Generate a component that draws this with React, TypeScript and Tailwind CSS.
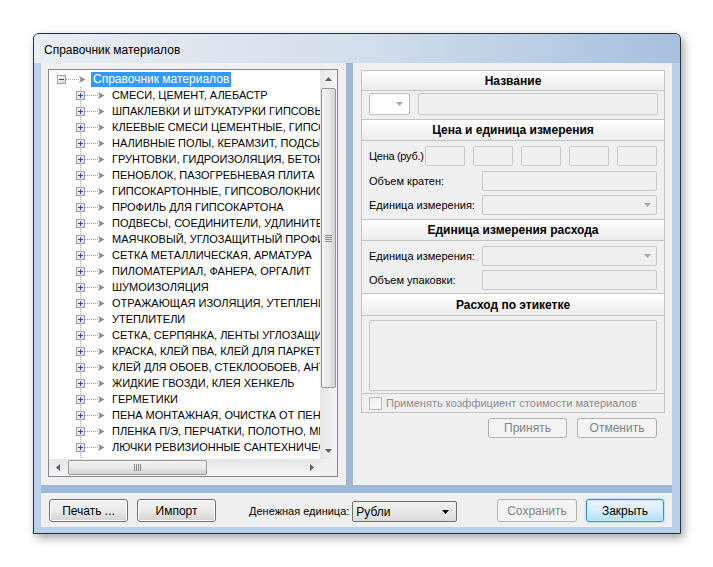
import clsx from "clsx";

const ITEMS = [
  "СМЕСИ, ЦЕМЕНТ, АЛЕБАСТР",
  "ШПАКЛЕВКИ И ШТУКАТУРКИ ГИПСОВЫЕ",
  "КЛЕЕВЫЕ СМЕСИ ЦЕМЕНТНЫЕ, ГИПСОВЫЕ",
  "НАЛИВНЫЕ ПОЛЫ, КЕРАМЗИТ, ПОДСЫПКА",
  "ГРУНТОВКИ, ГИДРОИЗОЛЯЦИЯ, БЕТОНОКОНТАКТ",
  "ПЕНОБЛОК, ПАЗОГРЕБНЕВАЯ ПЛИТА",
  "ГИПСОКАРТОННЫЕ, ГИПСОВОЛОКНИСТЫЕ ЛИСТЫ",
  "ПРОФИЛЬ ДЛЯ ГИПСОКАРТОНА",
  "ПОДВЕСЫ, СОЕДИНИТЕЛИ, УДЛИНИТЕЛИ",
  "МАЯЧКОВЫЙ, УГЛОЗАЩИТНЫЙ ПРОФИЛЬ",
  "СЕТКА МЕТАЛЛИЧЕСКАЯ, АРМАТУРА",
  "ПИЛОМАТЕРИАЛ, ФАНЕРА, ОРГАЛИТ",
  "ШУМОИЗОЛЯЦИЯ",
  "ОТРАЖАЮЩАЯ ИЗОЛЯЦИЯ, УТЕПЛЕНИЕ",
  "УТЕПЛИТЕЛИ",
  "СЕТКА, СЕРПЯНКА, ЛЕНТЫ УГЛОЗАЩИТНЫЕ",
  "КРАСКА, КЛЕЙ ПВА, КЛЕЙ ДЛЯ ПАРКЕТА",
  "КЛЕЙ ДЛЯ ОБОЕВ, СТЕКЛООБОЕВ, АНТИСЕПТИК",
  "ЖИДКИЕ ГВОЗДИ, КЛЕЯ ХЕНКЕЛЬ",
  "ГЕРМЕТИКИ",
  "ПЕНА МОНТАЖНАЯ, ОЧИСТКА ОТ ПЕНЫ",
  "ПЛЕНКА П/Э, ПЕРЧАТКИ, ПОЛОТНО, МЕШКИ",
  "ЛЮЧКИ РЕВИЗИОННЫЕ САНТЕХНИЧЕСКИЕ",
  "ИНСТРУМЕНТ",
];

/* узел дерева: квадратик +/-, пунктир и стрелка */
function NodeGlyph({ root }: { root?: boolean }) {
  return (
    <svg width="29" height="16" viewBox="0 0 29 16" className="shrink-0">
      <defs>
        <linearGradient id="boxg" x1="0" y1="0" x2="1" y2="1">
          <stop offset="0" stopColor="#ffffff" />
          <stop offset="1" stopColor="#d6d6d6" />
        </linearGradient>
      </defs>
      {!root && (
        <line x1="4.5" y1="0" x2="4.5" y2="16" stroke="#a0a0a0" strokeDasharray="1 1" />
      )}
      <line x1="9" y1="8.5" x2="22" y2="8.5" stroke="#a0a0a0" strokeDasharray="1 1" />
      <rect x="0.5" y="4.5" width="8" height="8" fill="url(#boxg)" stroke="#97a0ab" />
      <line x1="2" y1="8.5" x2="7" y2="8.5" stroke="#2d4d87" />
      {!root && <line x1="4.5" y1="6" x2="4.5" y2="11" stroke="#2d4d87" />}
      <path d="M22 5 L28.5 8.5 L22 12 L23.6 8.5 Z" fill="#8c8c8c" />
    </svg>
  );
}

function Tri({ dir, color = "#606060" }: { dir: "up" | "down" | "left" | "right"; color?: string }) {
  const pts = {
    up: "0,4 3.5,0 7,4",
    down: "0,0 3.5,4 7,0",
    left: "4,0 0,3.5 4,7",
    right: "0,0 4,3.5 0,7",
  }[dir];
  const vertical = dir === "up" || dir === "down";
  return (
    <svg width={vertical ? 7 : 4} height={vertical ? 4 : 7} viewBox={vertical ? "0 0 7 4" : "0 0 4 7"}>
      <polygon points={pts} fill={color} />
    </svg>
  );
}

function WinButton({
  children,
  className,
  disabled,
  focused,
}: {
  children: React.ReactNode;
  className?: string;
  disabled?: boolean;
  focused?: boolean;
}) {
  return (
    <div
      className={clsx(
        "flex items-center justify-center rounded-[3px] border text-[12px]",
        disabled && "border-[#adb2b5] bg-[#f4f4f4] text-[#838383]",
        focused &&
          "border-[#3d8ed0] bg-linear-to-b from-[#eaf6fd] via-[#d6effc] to-[#b4def5] shadow-[inset_0_0_0_1px_#c4ebfb,0_0_2px_#5ab8ee]",
        !disabled &&
          !focused &&
          "border-[#707070] bg-linear-to-b from-[#f3f3f3] via-[#ebebeb] to-[#d3d3d3] shadow-[inset_0_0_0_1px_#fbfbfb]",
        className
      )}
    >
      {children}
    </div>
  );
}

function Field({ w, h = "h-[20px]", select }: { w: string; h?: string; select?: boolean }) {
  return (
    <div
      className={clsx(
        "flex items-center justify-end rounded-[2px] border border-[#c8c8c8] bg-[#f0f0f0] pr-[5px]",
        w,
        h
      )}
    >
      {select && <Tri dir="down" color="#a8a8a8" />}
    </div>
  );
}

function Header({ title, h }: { title: string; h: string }) {
  return (
    <div
      className={clsx(
        "flex items-center justify-center border-b border-[#c4c4c4] bg-linear-to-b from-[#ffffff] to-[#ececec] text-[12px] font-bold",
        h
      )}
    >
      {title}
    </div>
  );
}

export default function App() {
  return (
    <div className="h-[567px] w-[713px] overflow-hidden bg-white font-['Liberation_Sans',Arial,sans-serif] text-black">
      {/* окно */}
      <div className="ml-[33px] mt-[33px] flex h-[501px] w-[648px] flex-col overflow-hidden rounded-t-[6px] border border-[#27313d] bg-[#b9d1ea] shadow-[3px_4px_10px_rgba(0,0,0,0.35)]">
        <div className="flex h-[29px] shrink-0 items-center bg-linear-to-r from-[#e9eef4] via-[#d3dfec] to-[#a6c0df] pl-[10px] pt-[3px] text-[12px]">
          Справочник материалов
        </div>

        <div className="flex flex-1 pb-[6px] pl-[7px] pr-[8px]">
          <div className="flex h-[464px] w-[631px] flex-col bg-[#9eb8d7]">
            <div className="flex h-[422px] gap-[7px]">
              {/* левая панель – дерево */}
              <div className="w-[305px] bg-[#f0f0f0] pl-[7px] pt-[6px]">
                <div className="flex h-[408px] w-[290px] flex-col border border-[#828790] bg-white">
                  <div className="flex h-[389px]">
                    <div className="w-[271px] overflow-hidden pt-[1px] whitespace-nowrap">
                      <div className="flex h-[16px] items-center">
                        <div className="w-[8px] shrink-0" />
                        <NodeGlyph root />
                        <span className="ml-[5px] h-[15px] bg-[#3399ff] px-[2px] text-[12px] leading-[15px] text-white">
                          Справочник материалов
                        </span>
                      </div>
                      {ITEMS.map((label) => (
                        <div key={label} className="flex h-[16px] items-center">
                          <div className="w-[27px] shrink-0" />
                          <NodeGlyph />
                          <span className="ml-[5px] px-[2px] text-[11px] leading-[16px]">{label}</span>
                        </div>
                      ))}
                    </div>
                    {/* вертикальная прокрутка */}
                    <div className="flex w-[17px] flex-col bg-linear-to-r from-[#e6e6e6] to-[#f5f5f5]">
                      <div className="flex h-[17px] items-center justify-center">
                        <Tri dir="up" />
                      </div>
                      <div className="mx-[1px] mt-[1px] flex h-[300px] items-center justify-center rounded-[2px] border border-[#979797] bg-linear-to-r from-[#f4f4f4] via-[#e8e8e8] to-[#d4d4d4]">
                        <div className="flex flex-col gap-[1px]">
                          <div className="h-[1px] w-[7px] bg-[#8a8a8a]" />
                          <div className="h-[1px] w-[7px] bg-[#8a8a8a]" />
                          <div className="h-[1px] w-[7px] bg-[#8a8a8a]" />
                          <div className="h-[1px] w-[7px] bg-[#8a8a8a]" />
                        </div>
                      </div>
                      <div className="mt-auto flex h-[17px] items-center justify-center">
                        <Tri dir="down" />
                      </div>
                    </div>
                  </div>
                  {/* горизонтальная прокрутка */}
                  <div className="flex h-[17px]">
                    <div className="flex w-[271px] items-center bg-linear-to-b from-[#e6e6e6] to-[#f5f5f5]">
                      <div className="flex w-[17px] justify-center">
                        <Tri dir="left" />
                      </div>
                      <div className="ml-[2px] flex h-[15px] w-[139px] items-center justify-center gap-[1px] rounded-[2px] border border-[#979797] bg-linear-to-b from-[#f4f4f4] via-[#e8e8e8] to-[#d4d4d4]">
                        <div className="h-[7px] w-[1px] bg-[#8a8a8a]" />
                        <div className="h-[7px] w-[1px] bg-[#8a8a8a]" />
                        <div className="h-[7px] w-[1px] bg-[#8a8a8a]" />
                        <div className="h-[7px] w-[1px] bg-[#8a8a8a]" />
                      </div>
                      <div className="ml-auto flex w-[17px] justify-center">
                        <Tri dir="right" />
                      </div>
                    </div>
                    <div className="w-[17px] bg-[#f0f0f0]" />
                  </div>
                </div>
              </div>

              {/* правая панель – свойства */}
              <div className="w-[319px] whitespace-nowrap bg-[#f0f0f0] pl-[8px] pt-[7px] text-[11px]">
                <div className="w-[304px] border border-[#c4c4c4]">
                  <Header title="Название" h="h-[20px]" />
                  <div className="flex h-[29px] gap-[8px] border-b border-[#c4c4c4] pl-[7px] pt-[2px]">
                    <div className="flex h-[22px] w-[41px] items-center justify-end rounded-[2px] border border-[#bdbdbd] bg-white pr-[6px]">
                      <Tri dir="down" color="#a8a8a8" />
                    </div>
                    <Field w="w-[240px]" h="h-[22px]" />
                  </div>

                  <Header title="Цена и единица измерения" h="h-[21px]" />
                  <div className="flex h-[79px] flex-col border-b border-[#c4c4c4] pl-[7px] pt-[5px]">
                    <div className="flex h-[20px] items-center">
                      <div className="w-[56px] tracking-[-0.3px]">Цена (руб.)</div>
                      <div className="flex gap-[8px]">
                        <Field w="w-[40px]" />
                        <Field w="w-[40px]" />
                        <Field w="w-[40px]" />
                        <Field w="w-[40px]" />
                        <Field w="w-[40px]" />
                      </div>
                    </div>
                    <div className="mt-[5px] flex h-[20px] items-center">
                      <div className="w-[113px]">Объем кратен:</div>
                      <Field w="w-[175px]" />
                    </div>
                    <div className="mt-[4px] flex h-[20px] items-center">
                      <div className="w-[113px]">Единица измерения:</div>
                      <Field w="w-[175px]" select />
                    </div>
                  </div>

                  <Header title="Единица измерения расхода" h="h-[21px]" />
                  <div className="flex h-[53px] flex-col border-b border-[#c4c4c4] pl-[7px] pt-[5px]">
                    <div className="flex h-[20px] items-center">
                      <div className="w-[113px]">Единица измерения:</div>
                      <Field w="w-[175px]" select />
                    </div>
                    <div className="mt-[4px] flex h-[20px] items-center">
                      <div className="w-[113px]">Объем упаковки:</div>
                      <Field w="w-[175px]" />
                    </div>
                  </div>

                  <Header title="Расход по этикетке" h="h-[22px]" />
                  <div className="h-[78px] border-b border-[#c4c4c4] pl-[7px] pt-[4px]">
                    <Field w="w-[288px]" h="h-[71px]" />
                  </div>

                  <div className="flex h-[18px] items-center pl-[7px]">
                    <div className="h-[13px] w-[13px] border border-[#bcbcbc] bg-linear-to-br from-[#f0f0f0] to-[#fafafa]" />
                    <span className="ml-[4px] text-[#8c8c8c]">Применять коэффициент стоимости материалов</span>
                  </div>
                </div>

                <div className="mt-[5px] flex w-[304px] justify-end gap-[10px] pr-[8px]">
                  <WinButton disabled className="h-[20px] w-[79px]">
                    Принять
                  </WinButton>
                  <WinButton disabled className="h-[20px] w-[80px]">
                    Отменить
                  </WinButton>
                </div>
              </div>
            </div>

            {/* нижняя панель */}
            <div className="mt-[8px] flex h-[34px] items-start whitespace-nowrap bg-[#f0f0f0] pl-[8px] pr-[8px] pt-[6px] text-[12px]">
              <WinButton className="h-[23px] w-[79px]">Печать ...</WinButton>
              <WinButton className="ml-[9px] h-[23px] w-[79px]">Импорт</WinButton>
              <div className="ml-[33px] mt-[4px] text-[11px]">Денежная единица:</div>
              <div className="ml-[3px] mt-[2px] flex h-[21px] w-[105px] items-center rounded-[2px] border border-[#707070] bg-linear-to-b from-[#f3f3f3] to-[#dcdcdc] pl-[3px] pr-[7px]">
                <span>Рубли</span>
                <span className="ml-auto flex">
                  <Tri dir="down" color="#000000" />
                </span>
              </div>
              <WinButton disabled className="ml-auto h-[23px] w-[80px]">
                Сохранить
              </WinButton>
              <WinButton focused className="ml-[9px] h-[23px] w-[78px]">
                Закрыть
              </WinButton>
            </div>
          </div>
        </div>
      </div>
    </div>
  );
}
